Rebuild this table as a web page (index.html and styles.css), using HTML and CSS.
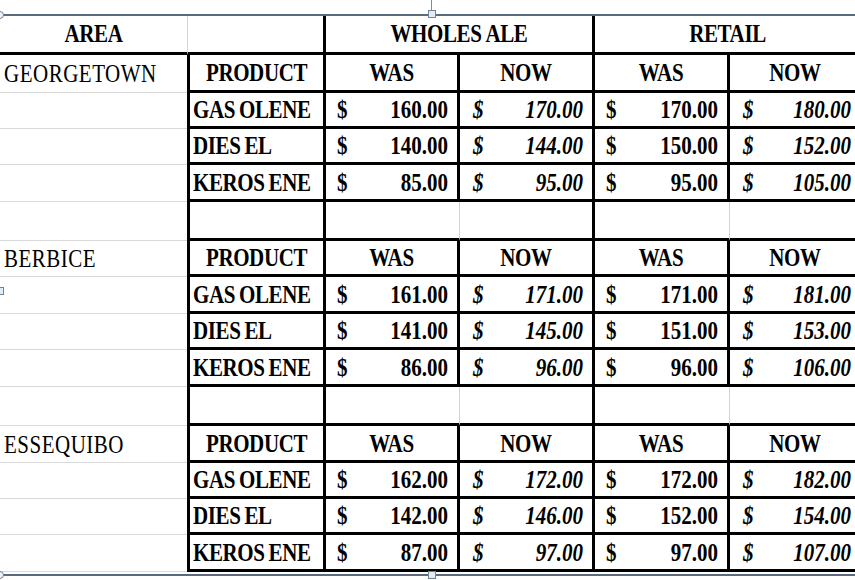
FILE: index.html
```html
<!DOCTYPE html>
<html>
<head>
<meta charset="utf-8">
<link rel="stylesheet" href="styles.css">
</head>
<body>
<div class="sheet">
  <div class="c head area-h"><span class="t">AREA</span></div>
  <div class="c head blank-h"></div>
  <div class="c head grp"><span class="t">WHOLES<i class="g"></i>ALE</span></div>
  <div class="c head grp"><span class="t">RETAIL</span></div>

  <div class="c area"><span class="t">GEORGETOWN</span></div>
  <div class="c prod ctr"><span class="t">PRODUCT</span></div>
  <div class="c hd"><span class="t">WAS</span></div>
  <div class="c hd"><span class="t">NOW</span></div>
  <div class="c hd"><span class="t">WAS</span></div>
  <div class="c hd"><span class="t">NOW</span></div>

  <div class="c area"></div>
  <div class="c prod"><span class="t">GAS<i class="g"></i>OLENE</span></div>
  <div class="c num"><span class="t">$</span><span class="t">160.00</span></div>
  <div class="c num it"><span class="t">$</span><span class="t">170.00</span></div>
  <div class="c num"><span class="t">$</span><span class="t">170.00</span></div>
  <div class="c num it"><span class="t">$</span><span class="t">180.00</span></div>

  <div class="c area"></div>
  <div class="c prod"><span class="t">DIES<i class="g"></i>EL</span></div>
  <div class="c num"><span class="t">$</span><span class="t">140.00</span></div>
  <div class="c num it"><span class="t">$</span><span class="t">144.00</span></div>
  <div class="c num"><span class="t">$</span><span class="t">150.00</span></div>
  <div class="c num it"><span class="t">$</span><span class="t">152.00</span></div>

  <div class="c area"></div>
  <div class="c prod"><span class="t">KEROS<i class="g"></i>ENE</span></div>
  <div class="c num"><span class="t">$</span><span class="t">85.00</span></div>
  <div class="c num it"><span class="t">$</span><span class="t">95.00</span></div>
  <div class="c num"><span class="t">$</span><span class="t">95.00</span></div>
  <div class="c num it"><span class="t">$</span><span class="t">105.00</span></div>

  <div class="c area"></div>
  <div class="c prod"></div>
  <div class="c empty-w"></div>
  <div class="c empty-n"></div>
  <div class="c empty-w"></div>
  <div class="c empty-n"></div>

  <div class="c area"><span class="t">BERBICE</span></div>
  <div class="c prod ctr"><span class="t">PRODUCT</span></div>
  <div class="c hd"><span class="t">WAS</span></div>
  <div class="c hd"><span class="t">NOW</span></div>
  <div class="c hd"><span class="t">WAS</span></div>
  <div class="c hd"><span class="t">NOW</span></div>

  <div class="c area"></div>
  <div class="c prod"><span class="t">GAS<i class="g"></i>OLENE</span></div>
  <div class="c num"><span class="t">$</span><span class="t">161.00</span></div>
  <div class="c num it"><span class="t">$</span><span class="t">171.00</span></div>
  <div class="c num"><span class="t">$</span><span class="t">171.00</span></div>
  <div class="c num it"><span class="t">$</span><span class="t">181.00</span></div>

  <div class="c area"></div>
  <div class="c prod"><span class="t">DIES<i class="g"></i>EL</span></div>
  <div class="c num"><span class="t">$</span><span class="t">141.00</span></div>
  <div class="c num it"><span class="t">$</span><span class="t">145.00</span></div>
  <div class="c num"><span class="t">$</span><span class="t">151.00</span></div>
  <div class="c num it"><span class="t">$</span><span class="t">153.00</span></div>

  <div class="c area"></div>
  <div class="c prod"><span class="t">KEROS<i class="g"></i>ENE</span></div>
  <div class="c num"><span class="t">$</span><span class="t">86.00</span></div>
  <div class="c num it"><span class="t">$</span><span class="t">96.00</span></div>
  <div class="c num"><span class="t">$</span><span class="t">96.00</span></div>
  <div class="c num it"><span class="t">$</span><span class="t">106.00</span></div>

  <div class="c area"></div>
  <div class="c prod"></div>
  <div class="c empty-w"></div>
  <div class="c empty-n"></div>
  <div class="c empty-w"></div>
  <div class="c empty-n"></div>

  <div class="c area"><span class="t">ESSEQUIBO</span></div>
  <div class="c prod ctr"><span class="t">PRODUCT</span></div>
  <div class="c hd"><span class="t">WAS</span></div>
  <div class="c hd"><span class="t">NOW</span></div>
  <div class="c hd"><span class="t">WAS</span></div>
  <div class="c hd"><span class="t">NOW</span></div>

  <div class="c area"></div>
  <div class="c prod"><span class="t">GAS<i class="g"></i>OLENE</span></div>
  <div class="c num"><span class="t">$</span><span class="t">162.00</span></div>
  <div class="c num it"><span class="t">$</span><span class="t">172.00</span></div>
  <div class="c num"><span class="t">$</span><span class="t">172.00</span></div>
  <div class="c num it"><span class="t">$</span><span class="t">182.00</span></div>

  <div class="c area"></div>
  <div class="c prod"><span class="t">DIES<i class="g"></i>EL</span></div>
  <div class="c num"><span class="t">$</span><span class="t">142.00</span></div>
  <div class="c num it"><span class="t">$</span><span class="t">146.00</span></div>
  <div class="c num"><span class="t">$</span><span class="t">152.00</span></div>
  <div class="c num it"><span class="t">$</span><span class="t">154.00</span></div>

  <div class="c area"></div>
  <div class="c prod"><span class="t">KEROS<i class="g"></i>ENE</span></div>
  <div class="c num"><span class="t">$</span><span class="t">87.00</span></div>
  <div class="c num it"><span class="t">$</span><span class="t">97.00</span></div>
  <div class="c num"><span class="t">$</span><span class="t">97.00</span></div>
  <div class="c num it"><span class="t">$</span><span class="t">107.00</span></div>
</div>

<div class="frame frame-top"></div>
<div class="frame frame-bottom"></div>
<div class="stem"></div>
<div class="handle h-top"></div>
<div class="handle h-bottom"></div>
<div class="handle h-left"></div>
<div class="dot d-top"></div>
<div class="dot d-bottom"></div>
</body>
</html>
```

FILE: styles.css
```css
html, body {
  margin: 0;
  padding: 0;
  overflow: hidden;
  background: #fff;
}

body {
  width: 855px;
  height: 580px;
  position: relative;
  font-family: "Liberation Serif", "Times New Roman", serif;
  color: #000;
}

.sheet {
  display: grid;
  grid-template-columns: 187px 139px 134px 135px 135px 133px;
  grid-template-rows: 40px 38px 36px 36px 37px 39px 36px 37px 36px 37px 39px 37px 36px 36px 37px;
  width: 863px;
  margin-top: 15px;
}

.c {
  box-sizing: border-box;
  display: flex;
  align-items: center;
  padding-top: 2px;
  font-size: 21px;
  line-height: 1;
  min-width: 0;
  overflow: hidden;
  white-space: nowrap;
}

.t {
  display: inline-block;
  transform: scaleY(1.15);
}

.g {
  display: inline-block;
  width: 4px;
}

.head {
  border-bottom: 3px solid #000;
  justify-content: center;
  font-weight: bold;
  letter-spacing: -0.4px;
}

.blank-h {
  border-left: 1px solid #d4d4d4;
  border-right: 3px solid #000;
}

.grp {
  grid-column: span 2;
  border-right: 3px solid #000;
}

.area {
  border-bottom: 1px solid #d9d9d9;
  padding-left: 4px;
  letter-spacing: 0.5px;
}

.prod {
  border-left: 3px solid #000;
  border-right: 3px solid #000;
  border-bottom: 3px solid #000;
  font-weight: bold;
  padding-left: 3px;
  letter-spacing: -0.4px;
}

.prod.ctr {
  justify-content: center;
  padding-left: 0;
}

.hd {
  border-right: 3px solid #000;
  border-bottom: 3px solid #000;
  justify-content: center;
  font-weight: bold;
  letter-spacing: -0.3px;
}

.num {
  border-right: 3px solid #000;
  border-bottom: 3px solid #000;
  justify-content: space-between;
  padding-right: 9px;
  padding-left: 11px;
  font-weight: bold;
}

.num.it {
  font-style: italic;
  padding-left: 13px;
}

.empty-w {
  border-right: 1px solid #d4d4d4;
  border-bottom: 3px solid #000;
}

.empty-n {
  border-right: 3px solid #000;
  border-bottom: 3px solid #000;
}

/* selection frame overlay */
.frame {
  position: absolute;
  left: 0;
  width: 855px;
  height: 2px;
  background: #5a6b7e;
}

.frame-top { top: 14px; }
.frame-bottom { top: 574px; }

.stem {
  position: absolute;
  left: 431px;
  top: 0;
  width: 1px;
  height: 10px;
  background: #7a8da2;
}

.handle {
  position: absolute;
  width: 6px;
  height: 6px;
  border: 1px solid #6f8296;
  background: #e3ebf3;
}

.h-top { left: 428px; top: 10px; }
.h-bottom { left: 428px; top: 571px; }
.h-left { left: -4px; top: 287px; }

.dot {
  position: absolute;
  width: 6px;
  height: 6px;
  border-radius: 50%;
  border: 1px solid #6f8296;
  background: #eef3f8;
}

.d-top { left: -4px; top: 11px; }
.d-bottom { left: -4px; top: 571px; }
```
